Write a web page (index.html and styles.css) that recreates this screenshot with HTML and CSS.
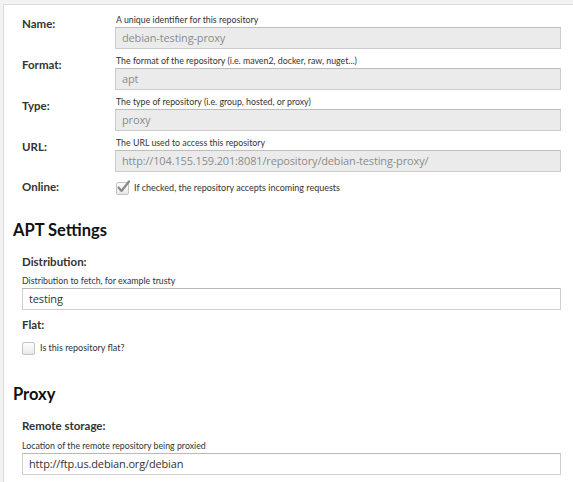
FILE: index.html
```html
<!DOCTYPE html>
<html>
<head>
<meta charset="utf-8">
<link rel="stylesheet" href="styles.css">
</head>
<body>
<div class="panel">
  <div class="form-top">
    <div class="row">
      <div class="label">Name:</div>
      <div class="field">
        <div class="help">A unique identifier for this repository</div>
        <div class="input disabled">debian-testing-proxy</div>
      </div>
    </div>
    <div class="row">
      <div class="label">Format:</div>
      <div class="field">
        <div class="help">The format of the repository (i.e. maven2, docker, raw, nuget...)</div>
        <div class="input disabled">apt</div>
      </div>
    </div>
    <div class="row">
      <div class="label">Type:</div>
      <div class="field">
        <div class="help">The type of repository (i.e. group, hosted, or proxy)</div>
        <div class="input disabled">proxy</div>
      </div>
    </div>
    <div class="row">
      <div class="label">URL:</div>
      <div class="field">
        <div class="help">The URL used to access this repository</div>
        <div class="input disabled">http://104.155.159.201:8081/repository/debian-testing-proxy/</div>
      </div>
    </div>
    <div class="row row-check">
      <div class="label">Online:</div>
      <div class="field check-line">
        <span class="checkbox checked"><svg width="15" height="14" viewBox="0 0 15 14"><path d="M2.5 7.5 L5.5 11 L13 1.5" fill="none" stroke="#8a8a8a" stroke-width="2.2" stroke-linecap="round" stroke-linejoin="round"/></svg></span>
        <span class="check-text">If checked, the repository accepts incoming requests</span>
      </div>
    </div>
  </div>

  <h2 class="section-title">APT Settings</h2>
  <div class="section">
    <div class="sub-label">Distribution:</div>
    <div class="help">Distribution to fetch, for example trusty</div>
    <div class="input">testing</div>
    <div class="sub-label flat-label">Flat:</div>
    <div class="check-line standalone">
      <span class="checkbox"></span>
      <span class="check-text">Is this repository flat?</span>
    </div>
  </div>

  <h2 class="section-title proxy-title">Proxy</h2>
  <div class="section">
    <div class="sub-label remote-label">Remote storage:</div>
    <div class="help">Location of the remote repository being proxied</div>
    <div class="input">http://ftp.us.debian.org/debian</div>
  </div>
</div>
</body>
</html>
```

FILE: styles.css
```css
html, body {
  margin: 0;
  padding: 0;
}
body {
  background: #f2f2f2;
  font-family: "Lato", "Open Sans", sans-serif;
  color: #333;
  height: 482px;
  overflow: hidden;
}
.panel {
  box-sizing: border-box;
  margin: 4px 0 0 3px;
  border-top: 1px solid #dcdcdc;
  border-left: 1px solid #dcdcdc;
  background: #fff;
  padding: 10px 12px 0 9px;
  height: 478px;
}
.form-top {
  margin-left: 9px;
}
.row {
  display: grid;
  grid-template-columns: 93px 1fr;
  margin-bottom: 7px;
}
.label, .sub-label {
  font-weight: 700;
  font-size: 11.5px;
  line-height: 14px;
  color: #333;
}
.label {
  padding-top: 2px;
}
.help {
  font-size: 8.8px;
  line-height: 10px;
  margin-bottom: 2px;
  padding-left: 1px;
  color: #333;
}
.input {
  box-sizing: border-box;
  height: 22px;
  border: 1px solid #cfcfcf;
  border-top-color: #b9b9b9;
  padding: 0 6px;
  font-family: "Open Sans", sans-serif;
  font-size: 11px;
  letter-spacing: -0.15px;
  line-height: 20px;
  color: #333;
  background: #fff;
  white-space: nowrap;
  overflow: hidden;
}
.input.disabled {
  background: #ebebeb;
  color: #8c8c8c;
  border-color: #cccccc;
  border-top-color: #bdbdbd;
}
.row-check {
  margin-bottom: 0;
}
.row-check .label {
  padding-top: 1px;
}
.check-line {
  display: flex;
  align-items: center;
  gap: 5px;
  height: 14px;
  padding-top: 2px;
  padding-left: 1px;
}
.checkbox {
  position: relative;
  box-sizing: border-box;
  width: 13px;
  height: 13px;
  border: 1px solid #c4c4c4;
  border-radius: 2px;
  background: linear-gradient(#fdfdfd, #e9e9e9);
  flex: none;
}
.checkbox svg {
  position: absolute;
  left: -1px;
  top: -3px;
}
.check-text {
  font-size: 9px;
  line-height: 14px;
  color: #333;
}
.section-title {
  margin: 25px 0 0 0;
  font-size: 16.5px;
  line-height: 20px;
  font-weight: 700;
  color: #111;
}
.section {
  padding-left: 9px;
}
.section .sub-label {
  margin-top: 15px;
  margin-bottom: 7px;
}
.section .flat-label {
  margin-top: 8px;
  margin-bottom: 0;
}
.section .remote-label {
  margin-top: 15px;
  margin-bottom: 8px;
}
.section .help {
  padding-left: 0;
}
.standalone {
  padding-left: 0;
  padding-top: 0;
  margin-top: 9px;
}
.proxy-title {
  margin-top: 29px;
}
```
